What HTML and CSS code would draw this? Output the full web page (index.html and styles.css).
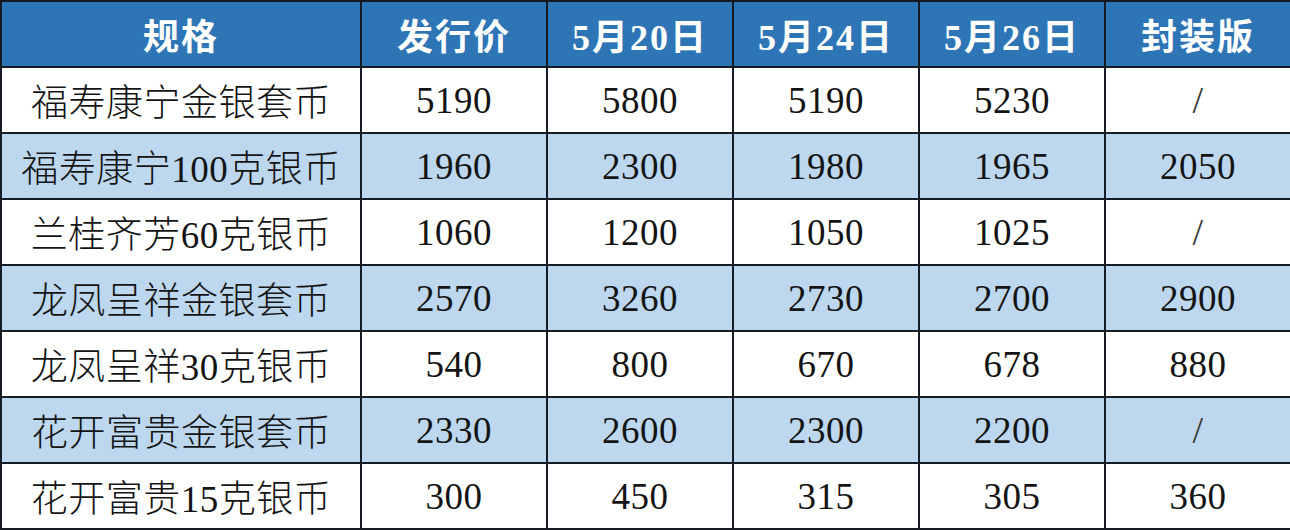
FILE: index.html
```html
<!DOCTYPE html>
<html lang="zh">
<head>
<meta charset="utf-8">
<title>价格表</title>
<link rel="stylesheet" href="styles.css">
</head>
<body>
<table class="price-table">
  <colgroup>
    <col class="col-name">
    <col class="col-num"><col class="col-num"><col class="col-num"><col class="col-num"><col class="col-num">
  </colgroup>
  <thead>
    <tr>
      <th>规格</th><th>发行价</th><th>5月20日</th><th>5月24日</th><th>5月26日</th><th>封装版</th>
    </tr>
  </thead>
  <tbody>
    <tr><td>福寿康宁金银套币</td><td>5190</td><td>5800</td><td>5190</td><td>5230</td><td class="slash">/</td></tr>
    <tr class="alt"><td>福寿康宁100克银币</td><td>1960</td><td>2300</td><td>1980</td><td>1965</td><td>2050</td></tr>
    <tr><td>兰桂齐芳60克银币</td><td>1060</td><td>1200</td><td>1050</td><td>1025</td><td class="slash">/</td></tr>
    <tr class="alt"><td>龙凤呈祥金银套币</td><td>2570</td><td>3260</td><td>2730</td><td>2700</td><td>2900</td></tr>
    <tr><td>龙凤呈祥30克银币</td><td>540</td><td>800</td><td>670</td><td>678</td><td>880</td></tr>
    <tr class="alt"><td>花开富贵金银套币</td><td>2330</td><td>2600</td><td>2300</td><td>2200</td><td class="slash">/</td></tr>
    <tr><td>花开富贵15克银币</td><td>300</td><td>450</td><td>315</td><td>305</td><td>360</td></tr>
  </tbody>
</table>
</body>
</html>
```

FILE: styles.css
```css
html, body {
  margin: 0;
  padding: 0;
  background: #ffffff;
}
.price-table {
  width: 1290px;
  border-collapse: collapse;
  table-layout: fixed;
  font-family: "Liberation Serif", "Noto Sans CJK SC", serif;
  color: #141414;
}
.col-name { width: 360px; }
.col-num { width: 186px; }
.price-table th,
.price-table td {
  border: 2px solid #151a24;
  height: 64px;
  padding: 0;
  text-align: center;
  vertical-align: middle;
  white-space: nowrap;
}
.price-table th {
  background: #2e75b6;
  color: #ffffff;
  font-size: 36px;
  font-weight: bold;
  letter-spacing: 2px;
}
.price-table td {
  font-size: 37px;
  font-weight: 300;
  letter-spacing: 0.5px;
}
.price-table tr.alt td {
  background: #bdd7ee;
}
.price-table td.slash {
  font-size: 38px;
  color: #3a3a3a;
  transform: none;
}
```
